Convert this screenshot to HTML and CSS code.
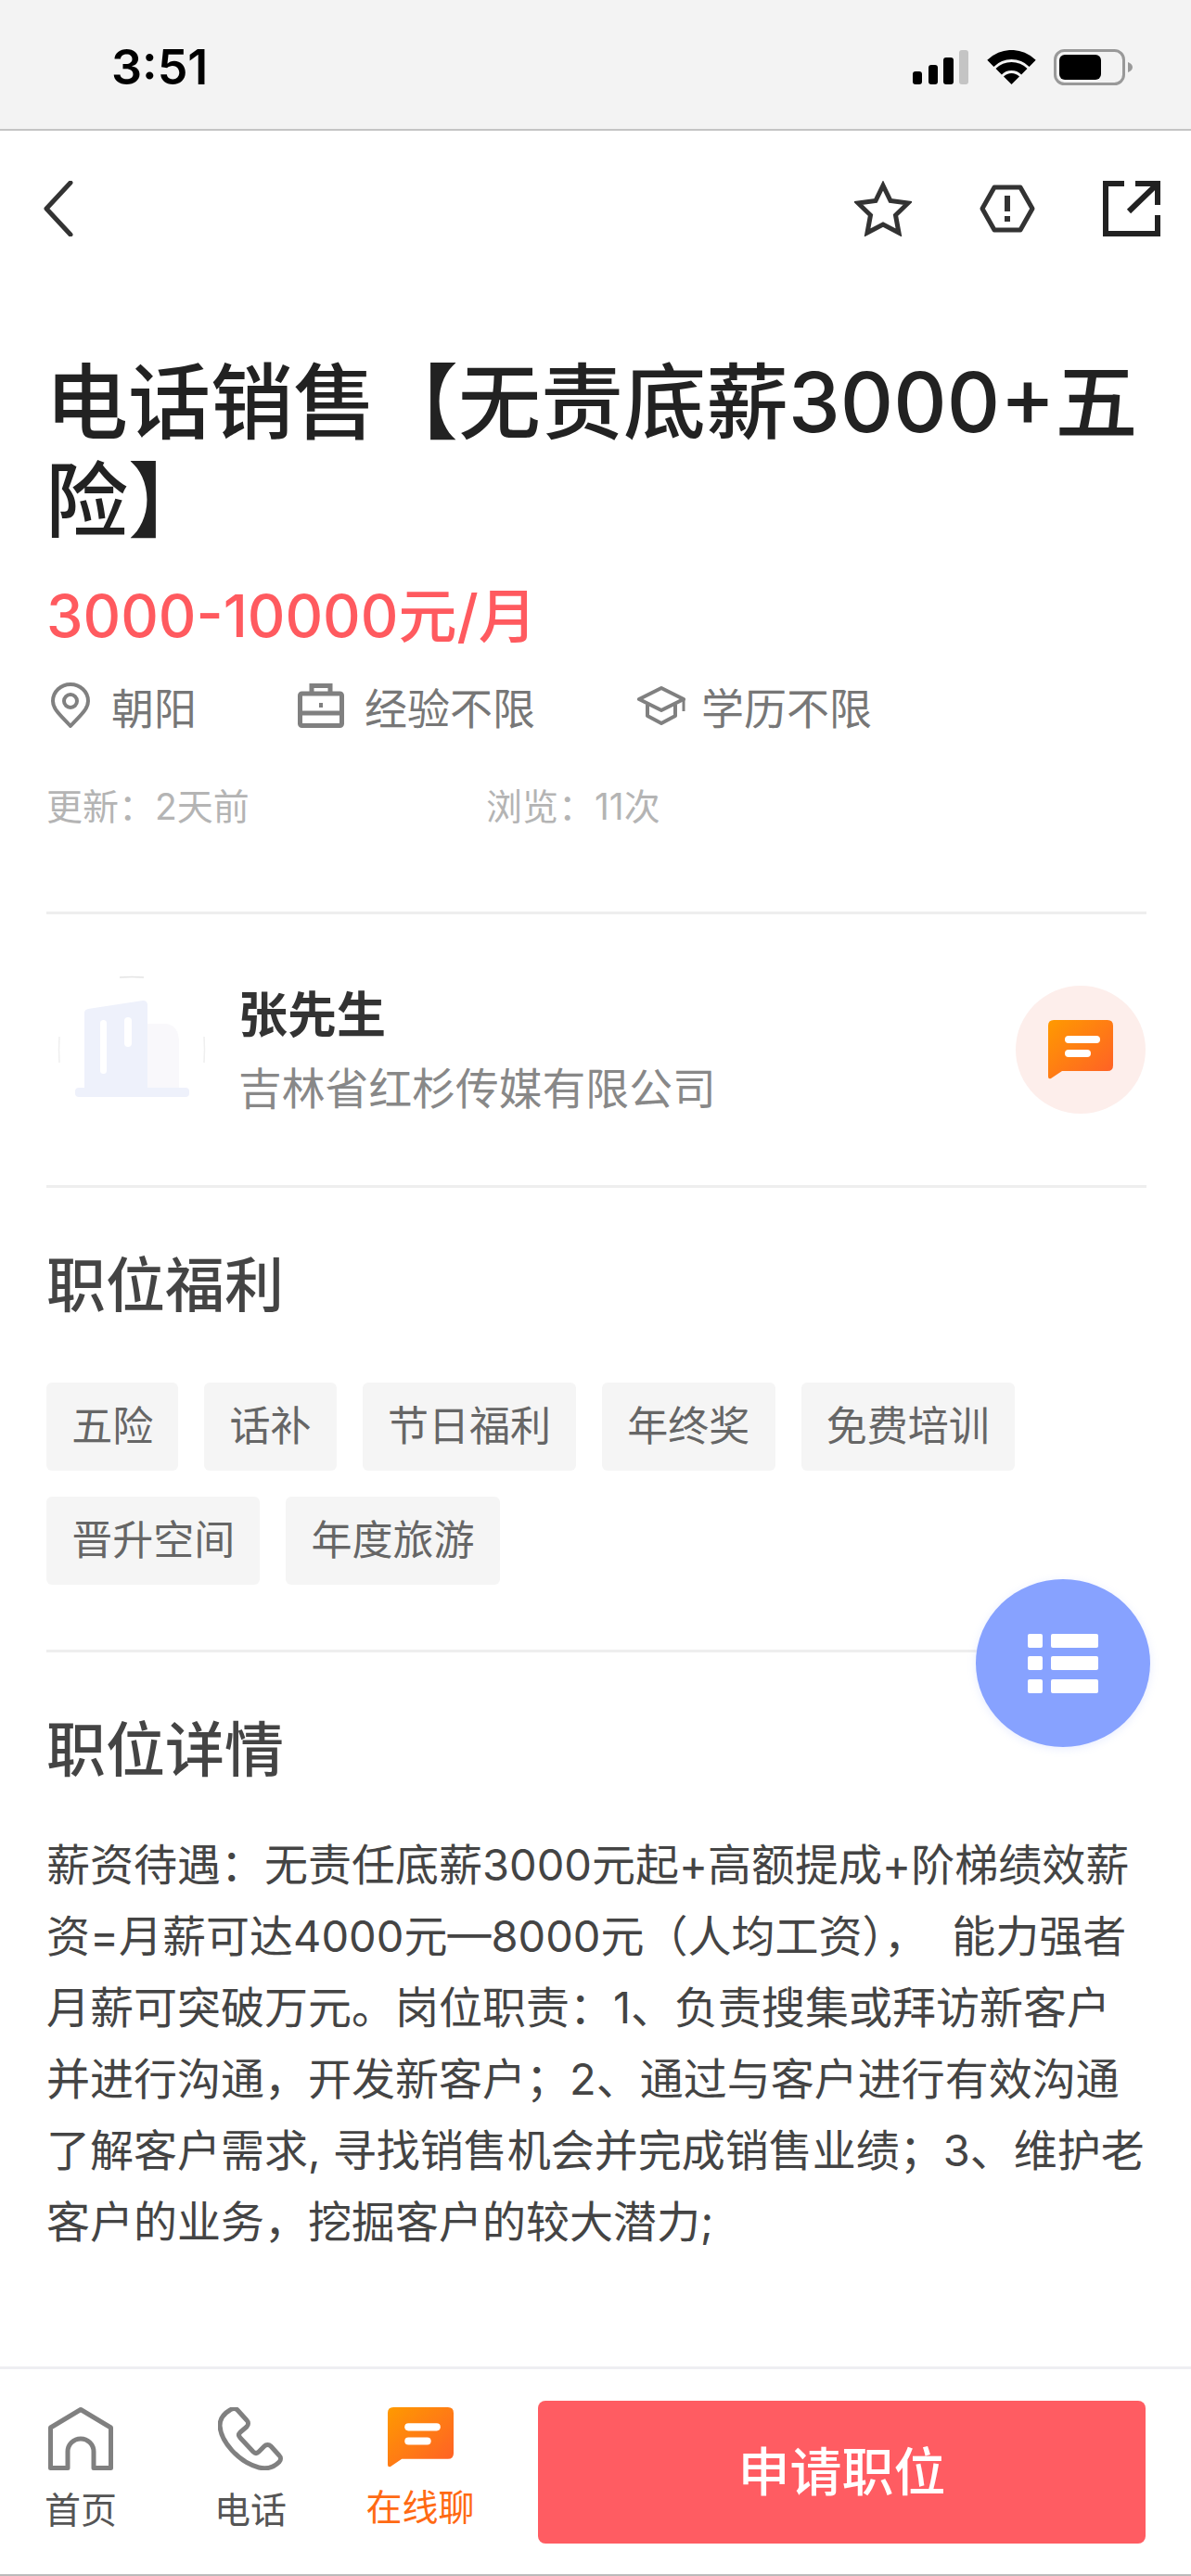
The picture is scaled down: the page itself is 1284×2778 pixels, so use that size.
FILE: index.html
```html
<!DOCTYPE html>
<html lang="zh-CN">
<head>
    <meta charset="UTF-8">
    <title>职位详情</title>
    <link rel="stylesheet" href="styles.css">
</head>
<body>
<div class="page">
    <div class="status">
        <span class="time">3:51</span>
        <div class="status-icons">
            <svg class="signal" width="60" height="37" viewBox="0 0 60 37">
                <rect x="0" y="23" width="10" height="14" rx="3" fill="#000"/>
                <rect x="17" y="16" width="10" height="21" rx="3" fill="#000"/>
                <rect x="33" y="8" width="11" height="29" rx="3" fill="#000"/>
                <rect x="50" y="0" width="10" height="37" rx="3" fill="#c4c4c4"/>
            </svg>
            <svg class="wifi" width="53" height="37" viewBox="0 0 53 37">
                <path d="M.3 10.8 A37 37 0 0 1 52.7 10.8 L45.6 17.9 A27 27 0 0 0 7.4 17.9 Z" fill="#000"/>
                <path d="M9.5 20 A24 24 0 0 1 43.5 20 L37.1 26.4 A15 15 0 0 0 15.9 26.4 Z" fill="#000"/>
                <path d="M26.5 37 L18 28.5 A12 12 0 0 1 35 28.5 Z" fill="#000"/>
            </svg>
            <svg class="battery" width="85" height="39" viewBox="0 0 85 39">
                <rect x="1.5" y="1.5" width="74" height="36" rx="10" fill="none" stroke="#999" stroke-width="3"/>
                <rect x="6" y="6" width="45" height="27" rx="6" fill="#000"/>
                <path d="M80 14 C83 15 85 17 85 19.5 C85 22 83 24 80 25 Z" fill="#999"/>
            </svg>
        </div>
    </div>

    <div class="nav">
        <svg width="32" height="60" viewBox="0 0 32 60">
            <path d="M29 2 L3 30 L29 58" fill="none" stroke="#333" stroke-width="5" stroke-linecap="round" stroke-linejoin="round"/>
        </svg>
        <div class="nav-right">
            <svg width="62" height="60" viewBox="0 0 62 60">
                <path d="M31 5 L39 21.5 L58 24 L44.5 37 L48 56 L31 47 L14 56 L17.5 37 L4 24 L23 21.5 Z" fill="none" stroke="#333" stroke-width="5"/>
            </svg>
            <svg width="60" height="52" viewBox="0 0 60 52">
                <path d="M16 3 H44 L57 26 L44 49 H16 L3 26 Z" fill="none" stroke="#333" stroke-width="5" stroke-linejoin="round"/>
                <path d="M30 12 V29" stroke="#333" stroke-width="6"/>
                <path d="M30 34 V40" stroke="#333" stroke-width="6"/>
            </svg>
            <svg width="62" height="60" viewBox="0 0 62 60">
                <path d="M23 3 H3 V57 H59 V37" fill="none" stroke="#222" stroke-width="6"/>
                <path d="M35 3 H59 V26 M59 3 L28 33" fill="none" stroke="#222" stroke-width="6"/>
            </svg>
        </div>
    </div>

    <h1 class="title">电话销售【无责底薪3000+五<br>险】</h1>
    <div class="price">3000-10000元/月</div>

    <div class="meta">
        <span class="meta-item m1">
            <svg width="44" height="50" viewBox="0 0 44 50">
                <path d="M22 47 C12 36 3 29 3 20 A19 18 0 0 1 41 20 C41 29 32 36 22 47 Z" fill="none" stroke="#808080" stroke-width="4" stroke-linejoin="round"/>
                <circle cx="22" cy="20" r="7" fill="none" stroke="#808080" stroke-width="4"/>
            </svg>
            朝阳
        </span>
        <span class="meta-item m2">
            <svg width="50" height="48" viewBox="0 0 50 48">
                <rect x="2.5" y="11" width="45" height="34.5" rx="2" fill="none" stroke="#808080" stroke-width="5"/>
                <path d="M15 11 V2.5 H35 V11" fill="none" stroke="#808080" stroke-width="5"/>
                <path d="M2 32 H48" stroke="#808080" stroke-width="5"/>
                <path d="M25 21 V26" stroke="#808080" stroke-width="4"/>
            </svg>
            经验不限
        </span>
        <span class="meta-item m3">
            <svg width="54" height="44" viewBox="0 0 54 44">
                <path d="M27 3 L51 15 L27 27 L3 15 Z" fill="none" stroke="#808080" stroke-width="4" stroke-linejoin="round"/>
                <path d="M12 21 V33 L27 41 L42 33 V21" fill="none" stroke="#808080" stroke-width="4" stroke-linejoin="round"/>
                <path d="M51 15 V28" stroke="#808080" stroke-width="3"/>
            </svg>
            学历不限
        </span>
    </div>

    <div class="stats">
        <span class="stat">更新&#xFF1A;2天前</span>
        <span>浏览&#xFF1A;11次</span>
    </div>

    <div class="line first-line"></div>

    <div class="company">
        <svg class="logo" width="162" height="160" viewBox="0 0 162 160">
            <path d="M68 2 Q81 1 94 2" fill="none" stroke="#e4e4e4" stroke-width="1.5"/>
            <path d="M3 66 Q2 80 3 94" fill="none" stroke="#efefef" stroke-width="1.5"/>
            <path d="M159 66 Q160 80 159 94" fill="none" stroke="#efefef" stroke-width="1.5"/>
            <path d="M98 52 H118 Q132 54 132 72 V121 H98 Z" fill="#f9f8fb"/>
            <path d="M30 40 Q30 37 34 36 L93 27 Q98 27 98 32 V121 H30 Z" fill="#eef1fb"/>
            <rect x="47" y="48" width="7" height="58" rx="3.5" fill="#fff"/>
            <rect x="73" y="45" width="8" height="32" rx="4" fill="#fff"/>
            <rect x="20" y="121" width="123" height="10" rx="4" fill="#eef1fb"/>
        </svg>
        <div class="company-text">
            <div class="boss">张先生</div>
            <div class="company-name">吉林省红杉传媒有限公司</div>
        </div>
        <div class="chat-circle">
            <svg width="70" height="64" viewBox="0 0 70 64">
                <defs>
                    <linearGradient id="chatA" x1="0" y1="0" x2="1" y2="1">
                        <stop offset="0" stop-color="#ff9a00"/>
                        <stop offset="1" stop-color="#ff5e28"/>
                    </linearGradient>
                </defs>
                <path d="M6 0 H64 Q70 0 70 6 V49 Q70 55 64 55 H15 L3 63 Q0 64 0 61 V6 Q0 0 6 0 Z" fill="url(#chatA)"/>
                <rect x="18" y="17" width="38" height="8" rx="4" fill="#fff"/>
                <rect x="18" y="32" width="28" height="8" rx="4" fill="#fff"/>
            </svg>
        </div>
    </div>

    <div class="line"></div>

    <h2 class="head">职位福利</h2>
    <div class="tags">
        <span class="tag">五险</span>
        <span class="tag">话补</span>
        <span class="tag">节日福利</span>
        <span class="tag">年终奖</span>
        <span class="tag">免费培训</span>
        <span class="tag">晋升空间</span>
        <span class="tag">年度旅游</span>
    </div>

    <div class="line"></div>

    <h2 class="head">职位详情</h2>
    <p class="desc">薪资待遇&#xFF1A;无责任底薪3000元起+高额提成+阶梯绩效薪<br>资=月薪可达4000元—8000元&#xFF08;人均工资&#xFF09;&#xFF0C;&nbsp;&nbsp;能力强者<br>月薪可突破万元。岗位职责&#xFF1A;1、负责搜集或拜访新客户<br>并进行沟通&#xFF0C;开发新客户&#xFF1B;2、通过与客户进行有效沟通<br>了解客户需求, 寻找销售机会并完成销售业绩&#xFF1B;3、维护老<br>客户的业务&#xFF0C;挖掘客户的较大潜力;</p>

    <div class="fab">
        <svg width="76" height="64" viewBox="0 0 76 64">
            <rect x="0" y="0" width="16" height="15" rx="2" fill="#fff"/>
            <rect x="25" y="0" width="51" height="15" rx="2" fill="#fff"/>
            <rect x="0" y="24" width="16" height="15" rx="2" fill="#fff"/>
            <rect x="25" y="24" width="51" height="15" rx="2" fill="#fff"/>
            <rect x="0" y="49" width="16" height="15" rx="2" fill="#fff"/>
            <rect x="25" y="49" width="51" height="15" rx="2" fill="#fff"/>
        </svg>
    </div>

    <div class="bottom">
        <div class="tab">
            <svg width="70" height="68" viewBox="0 0 70 68">
                <path d="M2.5 65.5 V22 L35 2.5 L67.5 22 V65.5 H49 V48 A14 14 0 0 0 21 48 V65.5 Z" fill="none" stroke="#808080" stroke-width="5" stroke-linejoin="round"/>
            </svg>
            <span>首页</span>
        </div>
        <div class="tab">
            <svg width="70" height="68" viewBox="0 0 70 68">
                <path d="M13 3 C16 1 19 1 21 3 L31 14 C33 16 33 19 31 21 L24 27 C22 29 22 31 24 33 L38 48 C40 50 42 50 44 48 L50 42 C52 40 55 40 57 42 L66 52 C68 54 68 57 66 59 C60 65 52 67 44 65 C22 59 3 37 2 20 C2 12 6 7 13 3 Z" fill="none" stroke="#808080" stroke-width="5" stroke-linejoin="round"/>
            </svg>
            <span>电话</span>
        </div>
        <div class="tab on">
            <svg width="71" height="65" viewBox="0 0 70 64">
                <defs>
                    <linearGradient id="chatB" x1="0" y1="0" x2="1" y2="1">
                        <stop offset="0" stop-color="#ff9a00"/>
                        <stop offset="1" stop-color="#ff5e28"/>
                    </linearGradient>
                </defs>
                <path d="M6 0 H64 Q70 0 70 6 V49 Q70 55 64 55 H15 L3 63 Q0 64 0 61 V6 Q0 0 6 0 Z" fill="url(#chatB)"/>
                <rect x="18" y="17" width="38" height="8" rx="4" fill="#fff"/>
                <rect x="18" y="32" width="28" height="8" rx="4" fill="#fff"/>
            </svg>
            <span>在线聊</span>
        </div>
        <div class="apply">申请职位</div>
    </div>
</div>
</body>
</html>
```

FILE: styles.css
```css
*{
    margin: 0;
    padding: 0;
    box-sizing: border-box;
}
body{
    background-color: #fff;
    font-family: Inter, "Noto Sans CJK SC", sans-serif;
}
.page{
    width: 1284px;
    height: 2778px;
    position: relative;
    overflow: hidden;
    display: flex;
    flex-direction: column;
}
.status{
    height: 141px;
    flex: none;
    background-color: #f3f3f3;
    border-bottom: 2px solid #c4c4c4;
    display: flex;
    justify-content: space-between;
    padding: 0 63px 0 120px;
}
.time{
    font-size: 52px;
    font-weight: 600;
    line-height: 50px;
    margin-top: 48px;
    color: #000;
}
.status-icons{
    display: flex;
    align-items: flex-start;
    margin-top: 53px;
}
.signal{
    margin-right: 20px;
    margin-top: 1px;
}
.wifi{
    margin-right: 19px;
    margin-top: 1px;
}
.nav{
    flex: none;
    display: flex;
    justify-content: space-between;
    align-items: center;
    padding: 54px 33px 126px 47px;
}
.nav-right{
    display: flex;
    align-items: center;
    gap: 73px;
}
.title{
    font-size: 89px;
    font-weight: 500;
    line-height: 106px;
    color: #222;
    margin-left: 49px;
    white-space: nowrap;
}
.price{
    font-size: 63px;
    font-weight: 500;
    line-height: 90px;
    color: #ff5a5f;
    margin: 26px 0 0 50px;
}
.meta{
    display: flex;
    align-items: center;
    height: 60px;
    margin: 22px 0 0 54px;
    font-size: 46px;
    color: #777;
}
.meta-item{
    display: flex;
    align-items: center;
    gap: 22px;
}
.m1{
    width: 267px;
}
.m2{
    width: 365px;
}
.m3{
    gap: 16px;
}
.stats{
    display: flex;
    margin: 54px 0 0 50px;
    font-size: 39px;
    line-height: 50px;
    color: #b4b4b4;
}
.stat{
    width: 474px;
}
.line{
    flex: none;
    height: 3px;
    margin: 0 48px 0 50px;
    background-color: #eee;
}
.first-line{
    margin-top: 88px;
}
.company{
    height: 292px;
    flex: none;
    display: flex;
    align-items: center;
    padding: 0 49px 0 61px;
}
.company-text{
    flex: 1;
    margin-left: 34px;
}
.boss{
    font-size: 53px;
    font-weight: 600;
    line-height: 70px;
    color: #333;
}
.company-name{
    font-size: 46.8px;
    line-height: 60px;
    margin-top: 14px;
    color: #888;
}
.chat-circle{
    width: 140px;
    height: 138px;
    border-radius: 50%;
    background-color: #fdeeeb;
    display: flex;
    align-items: center;
    justify-content: center;
}
.head{
    font-size: 64px;
    font-weight: 500;
    line-height: 90px;
    color: #444;
    margin: 60px 0 0 50px;
}
.tags{
    display: flex;
    flex-wrap: wrap;
    gap: 28px;
    margin: 60px 48px 70px 50px;
}
.tag{
    height: 95px;
    line-height: 95px;
    padding: 0 27.2px;
    font-size: 44px;
    color: #666;
    background-color: #f5f5f5;
    border-radius: 6px;
}
.desc{
    margin: 40px 0 0 50px;
    font-size: 47px;
    line-height: 77px;
    color: #444;
    white-space: nowrap;
}
.fab{
    position: absolute;
    left: 1052px;
    top: 1703px;
    width: 188px;
    height: 181px;
    border-radius: 50%;
    background-color: #87a2ff;
    box-shadow: 0 2px 10px rgba(135, 162, 255, 0.2);
    display: flex;
    align-items: center;
    justify-content: center;
}
.bottom{
    margin-top: auto;
    height: 226px;
    flex: none;
    display: flex;
    align-items: flex-start;
    gap: 43px;
    padding: 34px 49px 0 17px;
    border-top: 3px solid #eeeef2;
    border-bottom: 2px solid #bbb;
}
.tab{
    width: 140px;
    padding-top: 7px;
    display: flex;
    flex-direction: column;
    align-items: center;
    font-size: 39px;
    line-height: 50px;
    color: #555;
    white-space: nowrap;
}
.tab span{
    margin-top: 18px;
}
.on{
    color: #ff6a13;
}
.apply{
    flex: 1;
    height: 154px;
    line-height: 154px;
    margin-left: 14px;
    text-align: center;
    font-size: 56px;
    font-weight: 500;
    color: #fff;
    background-color: #ff5c62;
    border-radius: 8px;
}
```
